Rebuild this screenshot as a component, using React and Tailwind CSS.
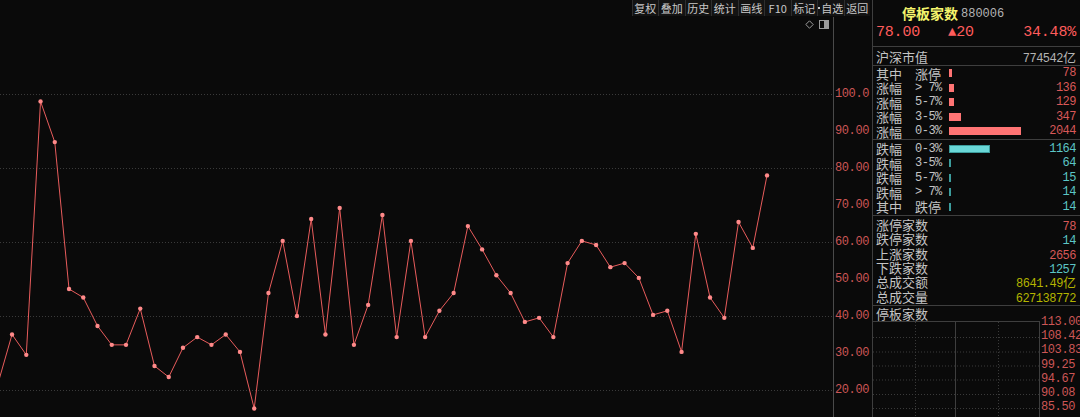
import React from 'react'

const cjk = "font-['Noto_Sans_CJK_SC',sans-serif]"
const mono = "font-['Liberation_Mono',monospace]"

// 停板家数 history (left to right)
const series = [21.6, 35, 29.5, 98, 87, 47.3, 45, 37.3, 32.2, 32.2, 42, 26.5, 23.5, 31.4, 34.3, 32.2, 35, 30.3, 15, 46.2, 60.3, 40, 66.2, 35, 69.2, 32.2, 43, 67.3, 34.3, 60.3, 34.3, 41.4, 46.2, 64.3, 58, 51, 46.2, 38.4, 39.5, 34.3, 54.3, 60.3, 59.2, 53.2, 54.3, 50.3, 40.3, 41.4, 30.3, 62.2, 45, 39.5, 65.4, 58.4, 78]

const tools = ['复权', '叠加', '历史', '统计', '画线', 'F10', '标记', '自选', '返回']
const axis = ['100.0', '90.00', '80.00', '70.00', '60.00', '50.00', '40.00', '30.00', '20.00']

const upRows = [
  { a: '其中', b: '涨停', n: 78 },
  { a: '涨幅', b: '> 7%', n: 136 },
  { a: '涨幅', b: '5-7%', n: 129 },
  { a: '涨幅', b: '3-5%', n: 347 },
  { a: '涨幅', b: '0-3%', n: 2044 },
]
const downRows = [
  { a: '跌幅', b: '0-3%', n: 1164 },
  { a: '跌幅', b: '3-5%', n: 64 },
  { a: '跌幅', b: '5-7%', n: 15 },
  { a: '跌幅', b: '> 7%', n: 14 },
  { a: '其中', b: '跌停', n: 14 },
]
const totals = [
  { k: '涨停家数', v: '78', c: 'text-[#d85858]' },
  { k: '跌停家数', v: '14', c: 'text-[#5cc6c6]' },
  { k: '上涨家数', v: '2656', c: 'text-[#d85858]' },
  { k: '下跌家数', v: '1257', c: 'text-[#5cc6c6]' },
  { k: '总成交额', v: '8641.49亿', c: 'text-[#b4b400]' },
  { k: '总成交量', v: '627138772', c: 'text-[#b4b400]' },
]
const miniAxis = ['113.00', '108.42', '103.83', '99.25', '94.67', '90.08', '85.50']

const yOf = (v) => 77 + (100 - v) * 3.7

function Chart() {
  const pts = series.map((v, i) => [-2.2 + i * 14.245, yOf(v)])
  return (
    <div className="relative w-[833px] h-full overflow-hidden">
      <svg width="833" height="400" className="block">
        {[100, 80, 60, 40, 20].map((g) => (
          <line key={g} x1="0" x2="833" y1={yOf(g) + 0.5} y2={yOf(g) + 0.5} stroke="#3a3a3a" strokeDasharray="1 2" />
        ))}
        <polyline points={pts.map((p) => p.join(',')).join(' ')} fill="none" stroke="#e85c5c" strokeWidth="1" />
        {pts.map((p, i) => (
          <circle key={i} cx={p[0]} cy={p[1]} r="2.2" fill="#ff8a8a" />
        ))}
      </svg>
      <div className="absolute top-[3px] right-[4px] flex items-center gap-[5px]">
        <svg width="9" height="9" viewBox="0 0 9 9">
          <path d="M4.5 0.8 L8.2 4.5 L4.5 8.2 L0.8 4.5 Z" fill="none" stroke="#9a9a9a" strokeWidth="1" />
        </svg>
        <svg width="10" height="9" viewBox="0 0 10 9">
          <rect x="0.5" y="0.5" width="9" height="8" fill="none" stroke="#9a9a9a" />
          <rect x="5" y="1" width="4" height="7" fill="#9a9a9a" />
        </svg>
      </div>
    </div>
  )
}

function BarRow({ a, b, n, up }) {
  const w = Math.max(1, n * 0.0354)
  return (
    <div className="h-[14.6px] flex items-center pl-[3px] pr-[4px] leading-none">
      <span className={`${cjk} w-[39px] text-[13px] text-[#c4c4c4]`}>{a}</span>
      <span className={`w-[34px] text-[#c4c4c4] ${/[a-z0-9%>]/i.test(b) ? `${mono} text-[12px] tracking-[-0.5px]` : `${cjk} text-[13px]`}`}>
        {b}
      </span>
      <div className="w-[80px] flex">
        <div
          style={{ width: w }}
          className={`h-[8px] ${up ? 'bg-[#ff7474]' : 'bg-[#6ad8d8] border border-[#3c9c9c]'}`}
        />
      </div>
      <span className={`${mono} flex-1 text-right text-[12px] tracking-[-0.5px] ${up ? 'text-[#d85858]' : 'text-[#5cc6c6]'}`}>{n}</span>
    </div>
  )
}

export default function App() {
  return (
    <div className="w-[1080px] h-[417px] bg-[#0a0a0a] flex overflow-hidden">
      {/* main chart */}
      <div className="w-[872px] flex flex-col">
        <div className="h-[17px] flex justify-end pr-[2px]">
          {tools.map((t) => (
            <div
              key={t}
              className={`${cjk} w-[26.5px] h-[16px] flex items-center justify-center whitespace-nowrap bg-[#131313] border-l border-[#2e2e2e] text-[11px] leading-none text-[#c8c8c8]`}
            >
              {t === '自选' && <span className="w-[2px] h-[2px] mr-[1px] bg-[#c8c8c8]" />}
              {t}
            </div>
          ))}
        </div>
        <div className="flex-1 flex">
          <Chart />
          <div className={`${mono} flex-1 border-l border-[#4a4a4a] pt-[58.5px] pl-[1px] flex flex-col text-[12px] tracking-[-0.4px] text-[#cc5656]`}>
            {axis.map((a) => (
              <div key={a} className="h-[37px] flex items-center leading-none">{a}</div>
            ))}
          </div>
        </div>
      </div>

      {/* right quote panel */}
      <div className="w-[208px] border-l border-[#3e3e3e] flex flex-col">
        <div className="h-[25px] flex items-end pb-[4px] pl-[29px] gap-[3px] leading-none">
          <span className={`${cjk} text-[14px] font-bold text-[#f4f46c]`}>停板家数</span>
          <span className={`${mono} text-[12px] text-[#b4b4b4]`}>880006</span>
        </div>
        <div className={`${mono} h-[17px] flex items-center pl-[3px] pr-[4px] text-[15px] tracking-[-0.2px] text-[#ff5c5c] leading-none`}>
          <span className="w-[72px]">78.00</span>
          <span className="flex items-center">
            <span className="text-[14px]">▲</span>20
          </span>
          <span className="flex-1 text-right">34.48%</span>
        </div>
        <div className="h-[6px]" />
        <div className="h-[19px] border-t border-[#3e3e3e] flex items-center pl-[3px] pr-[4px] leading-none">
          <span className={`${cjk} text-[13px] text-[#c4c4c4]`}>沪深市值</span>
          <span className="flex-1 text-right text-[#b4b4b4]">
            <span className={`${mono} text-[12px] tracking-[-0.5px]`}>774542</span>
            <span className={`${cjk} text-[13px]`}>亿</span>
          </span>
        </div>
        <div className="border-t border-[#3e3e3e] pb-[0.5px]">
          {upRows.map((r) => (
            <BarRow key={r.a + r.b} {...r} up />
          ))}
        </div>
        <div className="border-t border-[#3e3e3e] pt-[1px] pb-[1px]">
          {downRows.map((r) => (
            <BarRow key={r.a + r.b} {...r} />
          ))}
        </div>
        <div className="border-t border-[#3e3e3e] pt-[1px] pb-[1px]">
          {totals.map((r) => (
            <div key={r.k} className="h-[14.4px] flex items-center pl-[3px] pr-[4px] leading-none">
              <span className={`${cjk} text-[13px] text-[#c4c4c4]`}>{r.k}</span>
              <span className={`flex-1 text-right ${r.c}`}>
                <span className={`${mono} text-[12px] tracking-[-0.5px]`}>{r.v.replace('亿', '')}</span>
                {r.v.endsWith('亿') && <span className={`${cjk} text-[13px]`}>亿</span>}
              </span>
            </div>
          ))}
        </div>
        <div className={`${cjk} h-[17px] border-t border-[#3e3e3e] flex items-center pl-[3px] text-[13px] text-[#c4c4c4] leading-none`}>
          停板家数
        </div>
        <div className="flex-1 flex">
          <div className="w-[167px] border-t border-r border-[#3e3e3e]">
            <svg width="167" height="95" className="block">
              {[15, 29.5, 43.5, 57.5, 72, 86].map((y) => (
                <line key={y} x1="0" x2="167" y1={y + 0.5} y2={y + 0.5} stroke="#3a3a3a" strokeDasharray="1 2" />
              ))}
              <line x1="42.5" x2="42.5" y1="0" y2="95" stroke="#3a3a3a" strokeDasharray="1 2" />
              <line x1="125.5" x2="125.5" y1="0" y2="95" stroke="#3a3a3a" strokeDasharray="1 2" />
              <line x1="82.5" x2="82.5" y1="0" y2="95" stroke="#3e3e3e" />
            </svg>
          </div>
          <div className={`${mono} flex-1 mt-[-6px] pl-[1px] flex flex-col text-[12px] tracking-[-0.4px] text-[#cc5656] whitespace-nowrap overflow-hidden`}>
            {miniAxis.map((a) => (
              <div key={a} className="h-[14.2px] flex items-center leading-none">{a}</div>
            ))}
          </div>
        </div>
      </div>
    </div>
  )
}
